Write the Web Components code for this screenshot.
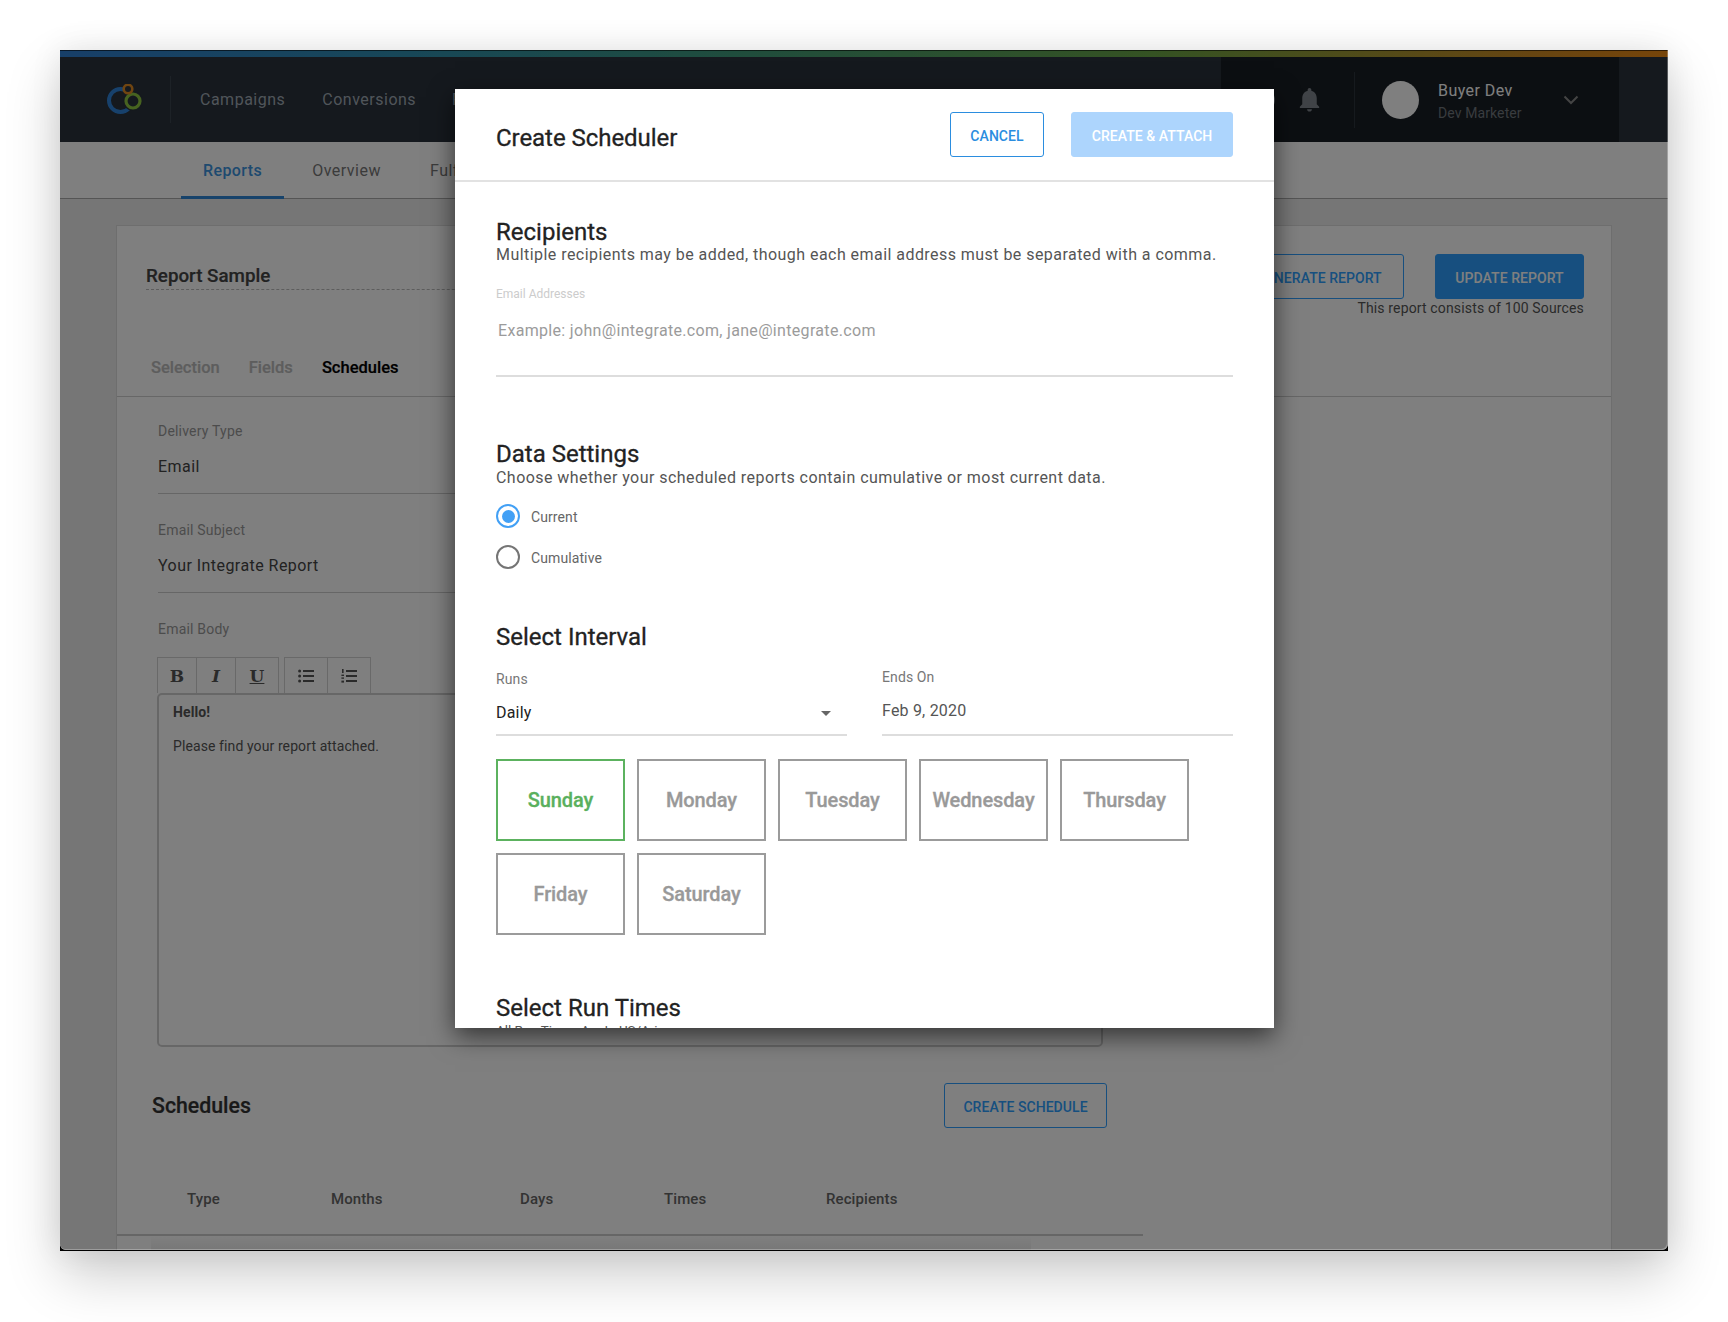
<!DOCTYPE html>
<html lang="en"><head><meta charset="utf-8"><title>Create Scheduler</title>
<style>
html,body{margin:0;padding:0;background:#fff;height:1322px;overflow:hidden}
body{font-family:Roboto,"Liberation Sans",sans-serif;padding:50px 60px 0;box-sizing:border-box}
</style></head><body>
<app-window>
  <top-nav></top-nav>
  <sub-nav></sub-nav>
  <report-page></report-page>
  <scheduler-modal slot="modal"></scheduler-modal>
</app-window>
<script>
function def(name,css,html){
  customElements.define(name,class extends HTMLElement{
    constructor(){super();const r=this.attachShadow({mode:'open'});
      r.innerHTML='<style>'+css+'</style>'+(typeof html==='function'?html(this):html);}
  });
}
const btnCss=`:host{display:inline-flex;box-sizing:border-box;height:45px;align-items:center;justify-content:center;border-radius:3px;font:500 14px/16px Roboto,sans-serif;letter-spacing:.05px;white-space:nowrap;padding:2px 0 0;border:1.5px solid var(--c,#2b8ddf);color:var(--c,#2b8ddf);background:transparent}
:host([solid]){background:var(--c,#2b8ddf);color:#fff}
:host([pale]){background:#add5fd;border-color:#add5fd;color:#fff}`;
def('ui-button',btnCss,'<slot></slot>');

def('app-window',`:host{display:block;width:1608px;height:1201px;background:#000;position:relative;box-shadow:0 24px 52px rgba(0,0,0,.2),0 0 30px rgba(0,0,0,.08)}
.in{height:1200px;background:#ededed;border-radius:0 0 6px 6px;overflow:hidden;position:relative}
.veil{position:absolute;inset:0;background:rgba(0,0,0,.5);box-shadow:inset -1px -1px 0 rgba(255,255,255,.28);border-radius:0 0 6px 6px}`,
`<div class="in"><slot></slot><div class="veil"></div></div><slot name="modal"></slot>`);

def('top-nav',`:host{display:block;background:#2a323c}
.bar{height:7px;background:linear-gradient(90deg,#2f7ed2 0,#2f8fb0 22%,#3f9a7a 42%,#6aa646 68%,#d08a22 92%,#ee8a14 100%);box-shadow:inset 0 1px 0 rgba(0,0,0,.6)}
.row{height:85px;display:flex;align-items:center}
.logo{margin-left:44px;display:block}
.div{width:1px;height:47px;background:#3a444e;margin:0 29px 0 26px}
a{font-size:16px;line-height:20px;letter-spacing:.5px;color:#a0aab4;margin-right:37px;padding-top:1px}
.right{margin-left:auto;width:400px;height:85px;margin-right:48px;background:#181e24;border:solid #2a323a;border-width:0 1px;box-sizing:border-box;display:flex;align-items:center;position:relative}
.help{margin-left:32px;width:22px;height:22px;border-radius:50%;background:#80878e}
.bell{margin-left:20px;display:block;color:#80878e}
.sep{width:1px;height:56px;background:#2c343c;margin-left:30px}
.ava{width:37px;height:38px;border-radius:50%;background:#fff;margin-left:27px}
.who{margin-left:19px;display:flex;flex-direction:column;width:117px;padding-top:4px}
.n{font-size:16px;line-height:20px;color:#fff;letter-spacing:.45px;margin-bottom:3px}
.r{font-size:14px;line-height:18px;color:#72787e;letter-spacing:.1px}
.chev{margin-left:8px;display:block}`,
`<div class="bar"></div><div class="row">
<svg class="logo" width="40" height="32" viewBox="0 0 40 32"><circle cx="16.5" cy="16.5" r="11.5" fill="none" stroke="#2f83d8" stroke-width="4"/><circle cx="29" cy="17" r="10" fill="#2a323c"/><circle cx="29" cy="17" r="7" fill="none" stroke="#8ec640" stroke-width="3.2"/><circle cx="24" cy="5" r="4.3" fill="#2a323c" stroke="#e08a22" stroke-width="2.6"/></svg>
<div class="div"></div><a>Campaigns</a><a>Conversions</a><a style="margin-left:-1px">Partners</a>
<div class="right"><span class="help"></span>
<svg class="bell" width="29" height="29" viewBox="0 0 24 24" fill="currentColor"><path d="M12 22c1.1 0 2-.9 2-2h-4c0 1.1.89 2 2 2zm6-6v-5c0-3.07-1.64-5.64-4.5-6.32V4c0-.83-.67-1.5-1.5-1.5s-1.5.67-1.5 1.5v.68C7.63 5.36 6 7.92 6 11v5l-2 2v1h16v-1l-2-2z"/></svg>
<span class="sep"></span><span class="ava"></span>
<div class="who"><span class="n">Buyer Dev</span><span class="r">Dev Marketer</span></div>
<svg class="chev" width="16" height="10" viewBox="0 0 16 10" fill="none" stroke="#888" stroke-width="2"><path d="M1.5 1.5 8 8l6.5-6.5"/></svg>
</div></div>`);

def('sub-nav',`:host{display:flex;height:57px;box-sizing:border-box;background:#fff;border-bottom:1px solid #aaa;padding-left:121px}
a{display:block;box-sizing:border-box;height:57px;padding:19px 22px 0;font-size:16px;line-height:20px;letter-spacing:.5px;color:#777;margin-right:5px}
a.on{color:#3c94df;font-weight:500;border-bottom:3px solid #2e86d6;letter-spacing:.4px;margin-right:6px}`,
`<a class="on">Reports</a><a>Overview</a><a>Fulfillment</a>`);

def('form-field',`:host{display:block;height:99px;box-sizing:border-box;border-bottom:0}
.l{font-size:14px;line-height:20px;color:#999;letter-spacing:.2px;padding-top:25px}
.v{font-size:16px;line-height:20px;color:#444;letter-spacing:.45px;margin-top:16px;padding-bottom:16px;border-bottom:1px solid #ccc}`,
el=>`<div class="l">${el.getAttribute('label')}</div><div class="v"><slot></slot></div>`);

def('rich-editor',`:host{display:block;margin-left:-1px}
.tb{display:flex;height:36px}
.g{display:flex;border:1px solid #d2d2d2;border-bottom:0;margin-right:5px}
.b{width:39px;box-sizing:border-box;display:flex;align-items:center;justify-content:center;border-right:1px solid #d2d2d2;color:#555}
.g .b:last-child{border-right:0}
.w{width:42px}
.t{font:700 17px/20px "DejaVu Serif",serif}
.box{height:354px;box-sizing:border-box;border:2px solid #cfcfcf;border-radius:5px;padding:7px 14px;font-size:14px;line-height:20px;letter-spacing:.1px;color:#555}
b{display:block;font-weight:700;margin-bottom:14px}
.i{font-style:italic}.u{text-decoration:underline}`,
`<div class="tb"><div class="g"><span class="b t">B</span><span class="b t i">I</span><span class="b t u w">U</span></div>
<div class="g"><span class="b" style="width:43px"><svg width="16" height="14" viewBox="0 0 16 14" fill="#555"><circle cx="1.6" cy="2" r="1.5"/><circle cx="1.6" cy="7" r="1.5"/><circle cx="1.6" cy="12" r="1.5"/><rect x="5" y="1" width="11" height="2"/><rect x="5" y="6" width="11" height="2"/><rect x="5" y="11" width="11" height="2"/></svg></span>
<span class="b" style="width:42px"><svg width="16" height="14" viewBox="0 0 16 14" fill="#555"><rect x="1" y="0" width="1.6" height="4"/><rect x="0.4" y="5.6" width="2.6" height="1.4"/><rect x="0.4" y="8.4" width="2.6" height="1.4"/><rect x="0.4" y="11.6" width="2.6" height="2"/><rect x="5" y="1" width="11" height="2"/><rect x="5" y="6" width="11" height="2"/><rect x="5" y="11" width="11" height="2"/></svg></span></div></div>
<div class="box"><b>Hello!</b>Please find your report attached.</div>`);

def('report-page',`:host{display:block;height:1052px;padding:26px 56px 0;box-sizing:border-box}
.card{background:#fff;border:1px solid #dcdcdc;border-bottom:0;box-sizing:border-box;width:1496px;height:1100px}
.head{display:flex;justify-content:space-between;padding:28px 27px 0 29px;height:102px;box-sizing:border-box}
.title{width:800px;height:36px;box-sizing:border-box;font:500 18.8px/45px Roboto,sans-serif;color:#444;border-bottom:1.5px dashed #bbb;-webkit-text-stroke:.2px currentColor}
.acts{display:flex;flex-direction:column;align-items:flex-end}
.btns{display:flex;gap:31px;--c:#2e9ffe}
.note{font-size:14px;line-height:18px;color:#555;letter-spacing:.15px}
.tabs{display:flex;gap:29px;height:69px;box-sizing:border-box;border-bottom:1px solid #cfcfcf;padding:30px 0 0 34px;font:500 16.5px/20px Roboto,sans-serif;color:#bbb;-webkit-text-stroke:.2px currentColor}
.tabs .on{color:#000}
.form{padding:0 0 0 41px;width:945px;margin-top:-1px}
.lab{font-size:14px;line-height:20px;color:#999;letter-spacing:.2px;padding-top:25px;height:38px}
.sched{display:flex;justify-content:space-between;align-items:center;width:955px;margin:36px 0 0 35px;height:45px}
.sched h3{margin:0;padding-top:1px;font:500 21.3px/28px Roboto,sans-serif;color:#333;-webkit-text-stroke:.2px currentColor}
.tbl{display:grid;grid-template-columns:144px 189px 144px 162px 1fr;width:1026px;box-sizing:border-box;padding:61px 0 25px 70px;border-bottom:2px solid #ccc;font:500 15px/20px Roboto,sans-serif;color:#666;letter-spacing:.1px}
.fade{width:880px;height:16px;margin-left:34px;background:linear-gradient(rgba(0,0,0,0),rgba(0,0,0,.07))}`,
`<div class="card"><div class="head"><div class="title">Report Sample</div>
<div class="acts"><div class="btns"><ui-button style="width:170px">GENERATE REPORT</ui-button><ui-button solid style="width:149px">UPDATE REPORT</ui-button></div><div class="note">This report consists of 100 Sources</div></div></div>
<div class="tabs"><span>Selection</span><span>Fields</span><span class="on">Schedules</span></div>
<div class="form"><form-field label="Delivery Type">Email</form-field><form-field label="Email Subject">Your Integrate Report</form-field>
<div class="lab">Email Body</div><rich-editor></rich-editor></div>
<div class="sched"><h3>Schedules</h3><ui-button style="--c:#2e9ffe;width:163px">CREATE SCHEDULE</ui-button></div>
<div class="tbl"><span>Type</span><span>Months</span><span>Days</span><span>Times</span><span>Recipients</span></div><div class="fade"></div></div>`);

def('section-head',`:host{display:block}
h2{margin:0;font:400 24px/28px Roboto,sans-serif;color:#222;-webkit-text-stroke:.3px currentColor}
p{margin:var(--pm,0) 0 0;font-size:var(--ps,16px);line-height:20px;color:#555;letter-spacing:var(--pl,.45px);white-space:nowrap}`,
el=>`<h2>${el.getAttribute('title')}</h2><p><slot></slot></p>`);

def('radio-option',`:host{display:flex;align-items:center;height:24px;font-size:14px;line-height:20px;color:#666;letter-spacing:.1px}
.c{width:24px;height:24px;box-sizing:border-box;border:2.5px solid #757575;border-radius:50%;margin-right:11px;display:flex;align-items:center;justify-content:center}
:host([on]) .c{border-color:#42a0f5}
:host([on]) .c::after{content:"";width:13px;height:13px;border-radius:50%;background:#42a0f5}
span.t{padding-top:2px}`,
`<span class="c"></span><span class="t"><slot></slot></span>`);

def('day-tile',`:host{display:flex;align-items:center;justify-content:center;width:129px;height:82px;box-sizing:border-box;border:2px solid #9b9b9b;color:#999;font:500 20px/24px Roboto,sans-serif;letter-spacing:-.1px;-webkit-text-stroke:.3px currentColor}
:host([on]){border-color:#5cb25f;color:#5ab05d}`,'<slot></slot>');

def('scheduler-modal',`:host{position:absolute;left:395px;top:39px;width:819px;height:939px;background:#fff;box-shadow:0 8px 24px rgba(0,0,0,.6);display:flex;flex-direction:column;overflow:hidden;color:#222}
.hd{height:93px;box-sizing:border-box;border-bottom:2px solid #e2e2e2;padding:23px 41px 0;display:flex;align-items:flex-start;flex:none}
.hd h1{margin:0 auto 0 0;font:400 24px/28px Roboto,sans-serif;padding-top:12px;color:#222;-webkit-text-stroke:.3px currentColor;letter-spacing:-.05px}
.hd ui-button+ui-button{margin-left:27px}
.bd{padding:36px 41px 0;flex:1;overflow:hidden}
.lab{font-size:12px;line-height:16px;color:#ccc;margin-top:21px}
.inp{height:75px;box-sizing:border-box;border-bottom:2px solid #ddd;padding:19px 0 0 2px;font-size:16px;line-height:20px;color:#9b9b9b;letter-spacing:.32px}
.radios{display:flex;flex-direction:column;gap:17px;margin-top:16px}
.two{display:grid;grid-template-columns:351px 351px;gap:35px;align-items:end;margin-top:16px}
.f .l{font-size:14px;line-height:20px;color:#777;letter-spacing:.1px;margin-bottom:14px}
.f .v{font-size:16px;line-height:20px;color:#222;border-bottom:2px solid #ddd;padding-bottom:11px;display:flex;justify-content:space-between;align-items:center;letter-spacing:.2px}
.f.e .v{color:#555;padding-bottom:13px}
.arr{width:0;height:0;border:solid transparent;border-width:5px 5px 0;border-top-color:#666;margin-right:16px}
.days{display:flex;flex-wrap:wrap;gap:12px;margin-top:23px}`,
`<div class="hd"><h1>Create Scheduler</h1><ui-button style="width:94px">CANCEL</ui-button><ui-button pale style="width:162px">CREATE &amp; ATTACH</ui-button></div>
<div class="bd">
<section-head title="Recipients" style="--pm:-1px">Multiple recipients may be added, though each email address must be separated with a comma.</section-head>
<div class="lab">Email Addresses</div><div class="inp">Example: john@integrate.com, jane@integrate.com</div>
<section-head title="Data Settings" style="margin-top:63px">Choose whether your scheduled reports contain cumulative or most current data.</section-head>
<div class="radios"><radio-option on>Current</radio-option><radio-option>Cumulative</radio-option></div>
<section-head title="Select Interval" style="margin-top:54px"></section-head>
<div class="two"><div class="f"><div class="l">Runs</div><div class="v">Daily<span class="arr"></span></div></div>
<div class="f e"><div class="l">Ends On</div><div class="v">Feb 9, 2020</div></div></div>
<div class="days"><day-tile on>Sunday</day-tile><day-tile>Monday</day-tile><day-tile>Tuesday</day-tile><day-tile>Wednesday</day-tile><day-tile>Thursday</day-tile><day-tile>Friday</day-tile><day-tile>Saturday</day-tile></div>
<section-head title="Select Run Times" style="margin-top:59px;--ps:13.4px;--pl:0;--pm:-1px">All Run Times Are In US/Arizona</section-head>
</div>`);
</script></body></html>
